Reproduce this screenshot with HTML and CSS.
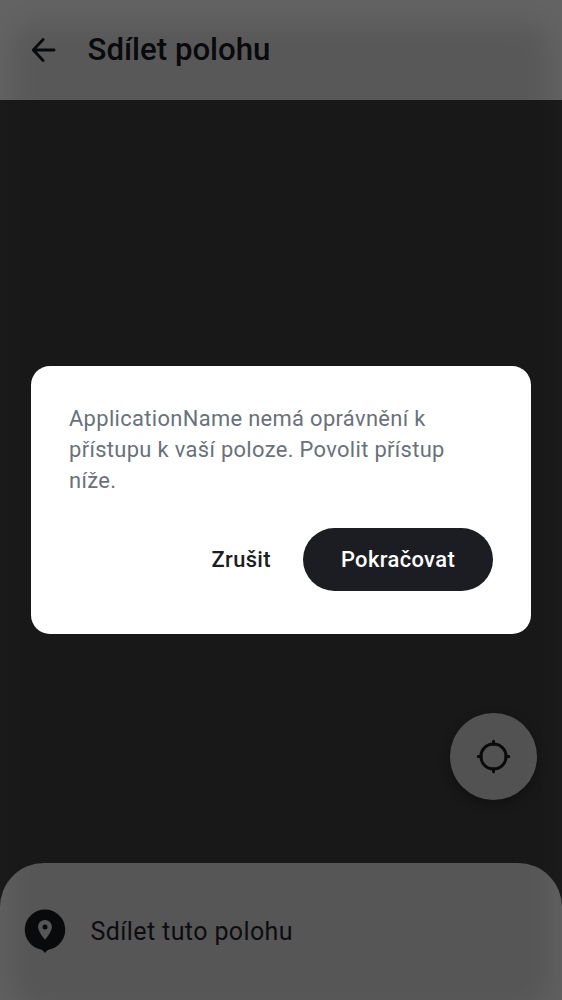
FILE: index.html
```html
<!DOCTYPE html>
<html lang="cs">
<head>
<meta charset="utf-8">
<title>Sdílet polohu</title>
<link rel="stylesheet" href="styles.css">
</head>
<body>
<div class="screen">
  <header class="app-bar">
    <svg class="back-icon" width="24" height="24" viewBox="0 0 24 24"><path d="M11.1 1.500 1.300 12l9.800 10.500M1.600 12H22.100"/></svg>
    <h1 class="title">Sdílet polohu</h1>
  </header>
  <main class="map">
    <button class="locate" aria-label="Moje poloha">
      <svg width="36" height="36" viewBox="0 0 36 36"><circle cx="17.500" cy="17.500" r="12.600"/><path d="M17.500 2.200v3M17.500 29.800v3M2.200 17.500h3M29.800 17.500h3"/></svg>
    </button>
  </main>
  <footer class="sheet">
    <svg class="pin" width="42" height="46" viewBox="0 0 42 46"><path class="pin-body" d="M21 .5a20.2 20.2 0 0 0-4 40c1.300.4 2.600 1.600 4 3.500 1.400-1.900 2.700-3.100 4-3.500A20.200 20.200 0 0 0 21 .5z"/><path class="pin-drop" d="M21 11.100c-4 0-6.900 3-6.900 6.800 0 5 6.900 12.700 6.900 12.700s6.900-7.700 6.900-12.700c0-3.800-2.900-6.800-6.900-6.800z"/><circle class="pin-body" cx="21" cy="18" r="2.500"/></svg>
    <span class="sheet-label">Sdílet tuto polohu</span>
  </footer>
  <div class="overlay">
    <div class="shade"></div>
    <section class="dialog" role="dialog">
      <p class="message">ApplicationName nemá oprávnění k přístupu k vaší poloze. Povolit přístup níže.</p>
      <div class="actions">
        <button class="cancel">Zrušit</button>
        <button class="confirm">Pokračovat</button>
      </div>
    </section>
  </div>
</div>
</body>
</html>
```
FILE: styles.css
```css
* { box-sizing: border-box; }
body { margin: 0; font-family: Roboto, sans-serif; }
button { border: 0; padding: 0; font: inherit; letter-spacing: inherit; }
.screen {
  position: relative;
  display: flex;
  flex-direction: column;
  width: 562px;
  height: 1000px;
  overflow: hidden;
  background: #1b1b1b;
}
.app-bar {
  display: flex;
  align-items: center;
  flex: 0 0 100px;
  gap: 31.5px;
  padding-left: 32px;
  background: #636363;
}
.back-icon { fill: none; stroke: #0b0c0e; stroke-width: 2.8; stroke-linecap: round; stroke-linejoin: round; }
.title { margin: 0; font-size: 31.2px; font-weight: 500; line-height: 40px; color: #0b0c0e; }
.map {
  display: flex;
  flex: 1;
  align-items: flex-end;
  justify-content: flex-end;
  padding: 0 25px 63px 0;
}
.locate {
  display: flex;
  align-items: center;
  justify-content: center;
  width: 87px;
  height: 87px;
  border-radius: 50%;
  background: #5c5c5c;
  box-shadow: 0 4px 12px rgba(0, 0, 0, .3);
}
.locate svg { fill: none; stroke: #0b0c0e; stroke-width: 3; stroke-linecap: round; }
.sheet {
  display: flex;
  align-items: center;
  flex: 0 0 137px;
  gap: 24.5px;
  padding-left: 24px;
  border-radius: 44px 44px 0 0;
  background: #606060;
}
.pin-body { fill: #0b0c0e; }
.pin-drop { fill: #606060; }
.sheet-label { font-size: 25px; letter-spacing: .39px; color: #0f0f11; }
.overlay {
  position: absolute;
  inset: 0;
  display: flex;
  align-items: center;
  justify-content: center;
}
.shade {
  position: absolute;
  inset: 22px 12px -10px;
  border-radius: 30px;
  background: rgba(0, 0, 0, .1);
  filter: blur(12px);
}
.dialog {
  position: relative;
  width: 500px;
  height: 268.6px;
  padding: 37.3px 38px 0;
  border-radius: 19px;
  background: #fff;
}
.message { margin: 0; font-size: 21.9px; line-height: 31.2px; letter-spacing: .34px; color: #68717c; }
.actions {
  display: flex;
  justify-content: flex-end;
  gap: 32px;
  margin-top: 31.4px;
  font-size: 21.9px;
  font-weight: 500;
  letter-spacing: .39px;
}
.cancel { background: none; color: #1c1d22; }
.confirm { width: 190px; height: 62.5px; border-radius: 32px; background: #1c1d22; color: #fff; }
```
